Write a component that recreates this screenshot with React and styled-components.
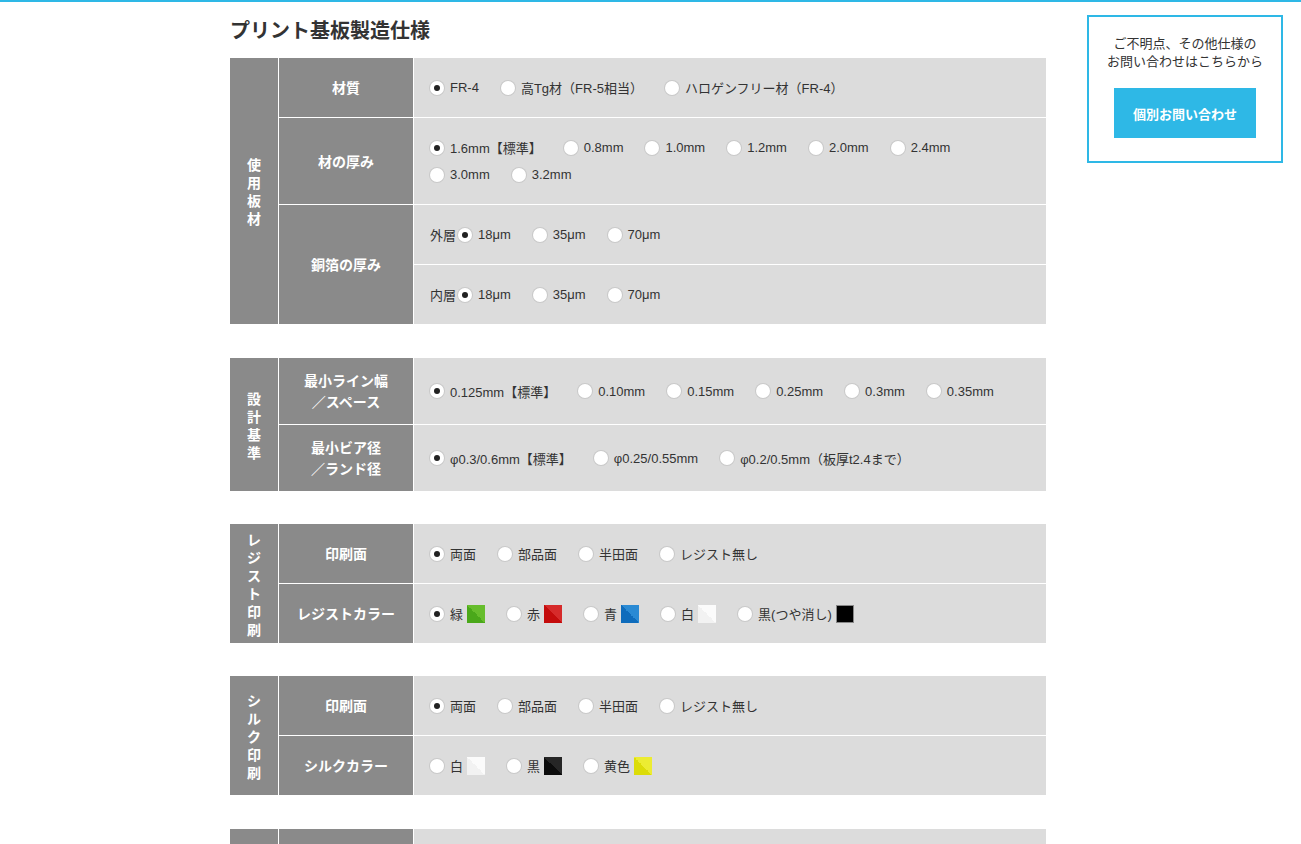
import React from 'react'
import styled, { createGlobalStyle } from 'styled-components'

const GlobalStyle = createGlobalStyle`
  html, body {
    margin: 0;
    padding: 0;
    background: #fff;
  }
  body {
    font-family: "Liberation Sans", "Noto Sans CJK JP", sans-serif;
    color: #333;
    border-top: 2px solid #2eb8e6;
  }
`

const Page = styled.div`
  display: flex;
  align-items: flex-start;
  padding-left: 230px;
`

const Main = styled.div`
  width: 816px;
  flex-shrink: 0;
`

const Title = styled.h1`
  margin: 0;
  padding-top: 14px;
  height: 42px;
  font-size: 20px;
  line-height: 28px;
  font-weight: bold;
  color: #333;
  font-family: "Noto Sans CJK JP", sans-serif;
`

const Section = styled.div`
  display: flex;
  gap: 1px;
  background: #fff;
  margin-bottom: ${props => props.after || 33}px;
`

const GroupLabel = styled.div`
  width: 48px;
  flex-shrink: 0;
  background: #8a8a8a;
  color: #fff;
  font-weight: bold;
  font-size: 14px;
  line-height: 18px;
  display: flex;
  flex-direction: column;
  align-items: center;
  justify-content: center;
  font-family: "Noto Sans CJK JP", sans-serif;

  span {
    display: block;
  }
`

const Rows = styled.div`
  flex: 1;
  display: flex;
  flex-direction: column;
  gap: 1px;
`

const Row = styled.div`
  display: flex;
  gap: 1px;
  min-height: ${props => props.h || 59}px;
`

const RowLabel = styled.div`
  width: 134px;
  flex-shrink: 0;
  background: #8a8a8a;
  color: #fff;
  font-weight: bold;
  font-size: 14px;
  line-height: 21px;
  display: flex;
  align-items: center;
  justify-content: center;
  text-align: center;
  font-family: "Noto Sans CJK JP", sans-serif;
`

const SubRows = styled.div`
  flex: 1;
  display: flex;
  flex-direction: column;
  gap: 1px;
`

const Content = styled.div`
  flex: 1;
  background: #dcdcdc;
  padding: 0 16px;
  display: flex;
  flex-direction: column;
  justify-content: center;
  min-height: ${props => props.h || 59}px;
  box-sizing: border-box;
`

const OptionLine = styled.div`
  display: flex;
  align-items: center;
  height: 27px;
  font-size: 13px;
`

const Prefix = styled.span`
  margin-right: 2px;
`

const Option = styled.label`
  display: inline-flex;
  align-items: center;
  margin-right: ${props => props.gap || 22}px;
  white-space: nowrap;
`

const Radio = styled.span`
  width: 14px;
  height: 14px;
  border-radius: 50%;
  background: #fff;
  box-shadow: 0 0 0 1px #c9c9c9;
  display: inline-flex;
  align-items: center;
  justify-content: center;
  margin-right: 6px;
  flex-shrink: 0;

  &::after {
    content: "";
    width: 6px;
    height: 6px;
    border-radius: 50%;
    background: ${props => (props.checked ? '#222' : 'transparent')};
  }
`

const Swatch = styled.span`
  display: inline-block;
  width: 18px;
  height: 18px;
  margin-left: 4px;
  background: linear-gradient(45deg, ${props => props.dark} 50%, ${props => props.light} 50%);
  box-shadow: ${props => (props.edge ? 'inset 0 0 0 1px #888' : 'none')};
`

const Aside = styled.div`
  margin-left: 41px;
  margin-top: 13px;
  width: 196px;
  box-sizing: border-box;
  border: 2px solid #2eb8e6;
  padding: 17px 0 23px;
  display: flex;
  flex-direction: column;
  align-items: center;
  font-family: "Noto Sans CJK JP", sans-serif;
`

const AsideText = styled.p`
  margin: 0 0 18px;
  font-size: 13px;
  line-height: 18px;
  text-align: center;
  color: #333;
`

const ContactButton = styled.a`
  display: flex;
  align-items: center;
  justify-content: center;
  width: 142px;
  height: 50px;
  background: #2eb8e6;
  color: #fff;
  font-weight: bold;
  font-size: 13px;
  text-decoration: none;
`

const Stack = ({ text }) => (
  <GroupLabel>
    {text.split('').map((c, i) => <span key={i}>{c}</span>)}
  </GroupLabel>
)

const Opt = ({ label, checked, swatch, gap }) => (
  <Option gap={gap}>
    <Radio checked={checked} />
    {label}
    {swatch && <Swatch {...swatch} />}
  </Option>
)

const Line = ({ items, prefix }) => (
  <OptionLine>
    {prefix && <Prefix>{prefix}</Prefix>}
    {items.map((it, i) => <Opt key={i} {...it} />)}
  </OptionLine>
)

const colors = {
  green: { dark: '#4aa81a', light: '#66bd2c' },
  red: { dark: '#c40c0c', light: '#d62a2a' },
  blue: { dark: '#0f6cbc', light: '#2a8ad4' },
  white: { dark: '#f2f2f2', light: '#fbfbfb' },
  black: { dark: '#000', light: '#000', edge: true },
  silkBlack: { dark: '#0c0c0c', light: '#262626' },
  yellow: { dark: '#dcdc08', light: '#ecec32' },
}

const sides = [
  { label: '両面', checked: true },
  { label: '部品面' },
  { label: '半田面' },
  { label: 'レジスト無し' },
]

const App = () => (
  <>
    <GlobalStyle />
    <Page>
      <Main>
        <Title>プリント基板製造仕様</Title>

        <Section after={34}>
          <Stack text="使用板材" />
          <Rows>
            <Row>
              <RowLabel>材質</RowLabel>
              <Content>
                <Line items={[
                  { label: 'FR-4', checked: true },
                  { label: '高Tg材（FR-5相当）' },
                  { label: 'ハロゲンフリー材（FR-4）' },
                ]} />
              </Content>
            </Row>
            <Row h={86}>
              <RowLabel>材の厚み</RowLabel>
              <Content h={86}>
                <Line items={[
                  { label: '1.6mm【標準】', checked: true },
                  { label: '0.8mm' },
                  { label: '1.0mm' },
                  { label: '1.2mm' },
                  { label: '2.0mm' },
                  { label: '2.4mm' },
                ]} />
                <Line items={[{ label: '3.0mm' }, { label: '3.2mm' }]} />
              </Content>
            </Row>
            <Row h={119}>
              <RowLabel>銅箔の厚み</RowLabel>
              <SubRows>
                <Content>
                  <Line prefix="外層" items={[
                    { label: '18μm', checked: true },
                    { label: '35μm' },
                    { label: '70μm' },
                  ]} />
                </Content>
                <Content>
                  <Line prefix="内層" items={[
                    { label: '18μm', checked: true },
                    { label: '35μm' },
                    { label: '70μm' },
                  ]} />
                </Content>
              </SubRows>
            </Row>
          </Rows>
        </Section>

        <Section>
          <Stack text="設計基準" />
          <Rows>
            <Row h={66}>
              <RowLabel>最小ライン幅<br />／スペース</RowLabel>
              <Content h={66}>
                <Line items={[
                  { label: '0.125mm【標準】', checked: true },
                  { label: '0.10mm' },
                  { label: '0.15mm' },
                  { label: '0.25mm' },
                  { label: '0.3mm' },
                  { label: '0.35mm' },
                ]} />
              </Content>
            </Row>
            <Row h={66}>
              <RowLabel>最小ビア径<br />／ランド径</RowLabel>
              <Content h={66}>
                <Line items={[
                  { label: 'φ0.3/0.6mm【標準】', checked: true },
                  { label: 'φ0.25/0.55mm' },
                  { label: 'φ0.2/0.5mm（板厚t2.4まで）' },
                ]} />
              </Content>
            </Row>
          </Rows>
        </Section>

        <Section>
          <Stack text="レジスト印刷" />
          <Rows>
            <Row>
              <RowLabel>印刷面</RowLabel>
              <Content>
                <Line items={sides} />
              </Content>
            </Row>
            <Row>
              <RowLabel>レジストカラー</RowLabel>
              <Content>
                <Line items={[
                  { label: '緑', checked: true, swatch: colors.green },
                  { label: '赤', swatch: colors.red },
                  { label: '青', swatch: colors.blue },
                  { label: '白', swatch: colors.white },
                  { label: '黒(つや消し)', swatch: colors.black },
                ]} />
              </Content>
            </Row>
          </Rows>
        </Section>

        <Section after={34}>
          <Stack text="シルク印刷" />
          <Rows>
            <Row>
              <RowLabel>印刷面</RowLabel>
              <Content>
                <Line items={sides} />
              </Content>
            </Row>
            <Row>
              <RowLabel>シルクカラー</RowLabel>
              <Content>
                <Line items={[
                  { label: '白', swatch: colors.white },
                  { label: '黒', swatch: colors.silkBlack },
                  { label: '黄色', swatch: colors.yellow },
                ]} />
              </Content>
            </Row>
          </Rows>
        </Section>

        <Section>
          <Stack text="表面処理" />
          <Rows>
            <Row>
              <RowLabel>表面処理</RowLabel>
              <Content>
                <Line items={[
                  { label: '有鉛半田レベラー', checked: true },
                  { label: '無鉛半田レベラー' },
                  { label: '無電解金フラッシュ' },
                ]} />
              </Content>
            </Row>
            <Row>
              <RowLabel>外形加工</RowLabel>
              <Content>
                <Line items={[
                  { label: 'ルーター加工', checked: true },
                  { label: 'Vカット' },
                ]} />
              </Content>
            </Row>
          </Rows>
        </Section>
      </Main>

      <Aside>
        <AsideText>ご不明点、その他仕様の<br />お問い合わせはこちらから</AsideText>
        <ContactButton href="#">個別お問い合わせ</ContactButton>
      </Aside>
    </Page>
  </>
)

export default App
